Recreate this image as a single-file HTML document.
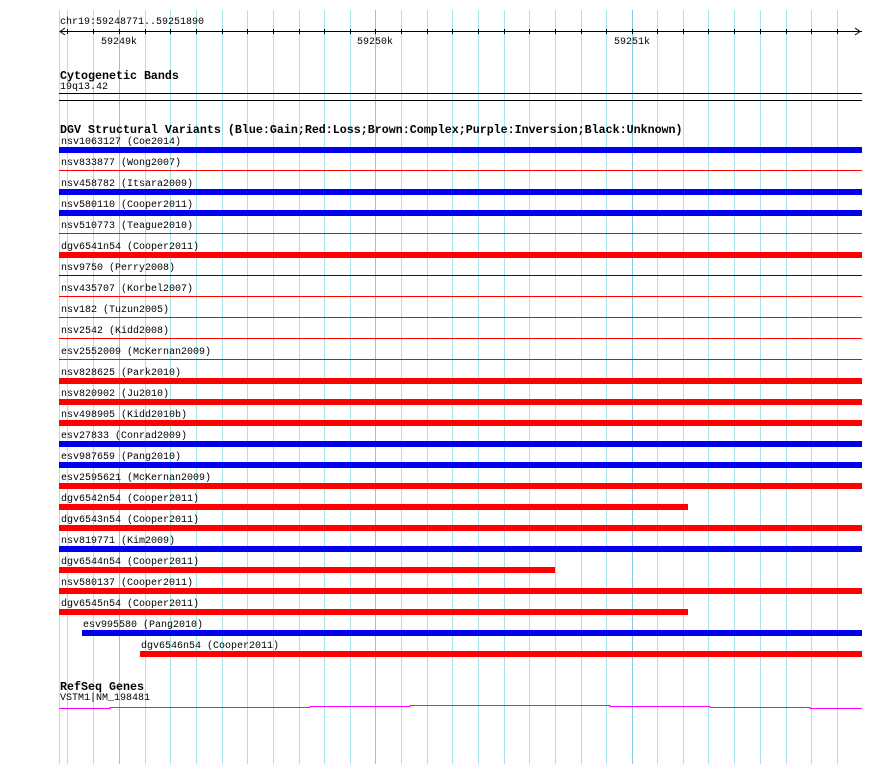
<!DOCTYPE html>
<html><head><meta charset="utf-8"><style>
body{margin:0;width:890px;height:764px;background:#fff;position:relative;overflow:hidden;font-family:"Liberation Mono",monospace;color:#000}
div{position:absolute}
.g{top:10px;bottom:0;width:1px;background:#a6e4ee}
.gm{top:10px;bottom:0;width:1px;background:#84c8ec}
.t{font-size:10px;line-height:10px;white-space:pre;margin-top:2px}
.b{font-size:11.67px;line-height:12px;font-weight:bold;white-space:pre;margin-top:2px}
.k{height:6px}
.n{height:1px}
.R{background:#ff0000}.B{background:#0000ee}
.tk{width:1px;height:5px;top:29px;background:#000}
</style></head><body>
<div class="g" style="left:59px"></div>
<div class="g" style="left:67px"></div><div class="g" style="left:93px"></div><div class="gm" style="left:119px"></div><div class="g" style="left:145px"></div><div class="g" style="left:170px"></div><div class="g" style="left:196px"></div><div class="g" style="left:222px"></div><div class="g" style="left:247px"></div><div class="g" style="left:273px"></div><div class="g" style="left:299px"></div><div class="g" style="left:324px"></div><div class="g" style="left:350px"></div><div class="gm" style="left:375px"></div><div class="g" style="left:401px"></div><div class="g" style="left:427px"></div><div class="g" style="left:452px"></div><div class="g" style="left:478px"></div><div class="g" style="left:504px"></div><div class="g" style="left:529px"></div><div class="g" style="left:555px"></div><div class="g" style="left:581px"></div><div class="g" style="left:606px"></div><div class="gm" style="left:632px"></div><div class="g" style="left:657px"></div><div class="g" style="left:683px"></div><div class="g" style="left:708px"></div><div class="g" style="left:734px"></div><div class="g" style="left:760px"></div><div class="g" style="left:786px"></div><div class="g" style="left:811px"></div><div class="g" style="left:837px"></div>

<div class="t" style="left:60px;top:16px">chr19:59248771..59251890</div>
<div style="left:60px;top:31px;width:802px;height:1px;background:#000"></div>
<svg style="position:absolute;left:58px;top:26px" width="808" height="11"><path d="M7 2 L2 5.5 L7 9 M797 2 L802 5.5 L797 9" stroke="#000" fill="none"/></svg>
<div class="tk" style="left:67px"></div><div class="tk" style="left:93px"></div><div class="tk" style="left:119px"></div><div class="tk" style="left:145px"></div><div class="tk" style="left:170px"></div><div class="tk" style="left:196px"></div><div class="tk" style="left:222px"></div><div class="tk" style="left:247px"></div><div class="tk" style="left:273px"></div><div class="tk" style="left:299px"></div><div class="tk" style="left:324px"></div><div class="tk" style="left:350px"></div><div class="tk" style="left:375px"></div><div class="tk" style="left:401px"></div><div class="tk" style="left:427px"></div><div class="tk" style="left:452px"></div><div class="tk" style="left:478px"></div><div class="tk" style="left:504px"></div><div class="tk" style="left:529px"></div><div class="tk" style="left:555px"></div><div class="tk" style="left:581px"></div><div class="tk" style="left:606px"></div><div class="tk" style="left:632px"></div><div class="tk" style="left:657px"></div><div class="tk" style="left:683px"></div><div class="tk" style="left:708px"></div><div class="tk" style="left:734px"></div><div class="tk" style="left:760px"></div><div class="tk" style="left:786px"></div><div class="tk" style="left:811px"></div><div class="tk" style="left:837px"></div>
<div class="t" style="left:101px;top:36px">59249k</div>
<div class="t" style="left:357px;top:36px">59250k</div>
<div class="t" style="left:614px;top:36px">59251k</div>

<div class="b" style="left:60px;top:68px">Cytogenetic Bands</div>
<div class="t" style="left:60px;top:81px">19q13.42</div>
<div style="left:59px;top:93px;width:803px;height:1px;background:#000"></div>
<div style="left:59px;top:100px;width:803px;height:1px;background:#000"></div>

<div class="b" style="left:60px;top:122px">DGV Structural Variants (Blue:Gain;Red:Loss;Brown:Complex;Purple:Inversion;Black:Unknown)</div>

<div class="t" style="left:61px;top:136px">nsv1063127 (Coe2014)</div><div class="k B" style="left:59px;top:147px;width:803px"></div>
<div class="t" style="left:61px;top:157px">nsv833877 (Wong2007)</div><div class="n R" style="left:59px;top:170px;width:803px"></div>
<div class="t" style="left:61px;top:178px">nsv458782 (Itsara2009)</div><div class="k B" style="left:59px;top:189px;width:803px"></div>
<div class="t" style="left:61px;top:199px">nsv580110 (Cooper2011)</div><div class="k B" style="left:59px;top:210px;width:803px"></div>
<div class="t" style="left:61px;top:220px">nsv510773 (Teague2010)</div><div class="n R" style="left:59px;top:233px;width:803px"></div>
<div class="t" style="left:61px;top:241px">dgv6541n54 (Cooper2011)</div><div class="k R" style="left:59px;top:252px;width:803px"></div>
<div class="t" style="left:61px;top:262px">nsv9750 (Perry2008)</div><div class="n B" style="left:59px;top:275px;width:803px"></div>
<div class="t" style="left:61px;top:283px">nsv435707 (Korbel2007)</div><div class="n R" style="left:59px;top:296px;width:803px"></div>
<div class="t" style="left:61px;top:304px">nsv182 (Tuzun2005)</div><div class="n R" style="left:59px;top:317px;width:803px"></div>
<div class="t" style="left:61px;top:325px">nsv2542 (Kidd2008)</div><div class="n R" style="left:59px;top:338px;width:803px"></div>
<div class="t" style="left:61px;top:346px">esv2552009 (McKernan2009)</div><div class="n R" style="left:59px;top:359px;width:803px"></div>
<div class="t" style="left:61px;top:367px">nsv828625 (Park2010)</div><div class="k R" style="left:59px;top:378px;width:803px"></div>
<div class="t" style="left:61px;top:388px">nsv820902 (Ju2010)</div><div class="k R" style="left:59px;top:399px;width:803px"></div>
<div class="t" style="left:61px;top:409px">nsv498905 (Kidd2010b)</div><div class="k R" style="left:59px;top:420px;width:803px"></div>
<div class="t" style="left:61px;top:430px">esv27833 (Conrad2009)</div><div class="k B" style="left:59px;top:441px;width:803px"></div>
<div class="t" style="left:61px;top:451px">esv987659 (Pang2010)</div><div class="k B" style="left:59px;top:462px;width:803px"></div>
<div class="t" style="left:61px;top:472px">esv2595621 (McKernan2009)</div><div class="k R" style="left:59px;top:483px;width:803px"></div>
<div class="t" style="left:61px;top:493px">dgv6542n54 (Cooper2011)</div><div class="k R" style="left:59px;top:504px;width:629px"></div>
<div class="t" style="left:61px;top:514px">dgv6543n54 (Cooper2011)</div><div class="k R" style="left:59px;top:525px;width:803px"></div>
<div class="t" style="left:61px;top:535px">nsv819771 (Kim2009)</div><div class="k B" style="left:59px;top:546px;width:803px"></div>
<div class="t" style="left:61px;top:556px">dgv6544n54 (Cooper2011)</div><div class="k R" style="left:59px;top:567px;width:496px"></div>
<div class="t" style="left:61px;top:577px">nsv580137 (Cooper2011)</div><div class="k R" style="left:59px;top:588px;width:803px"></div>
<div class="t" style="left:61px;top:598px">dgv6545n54 (Cooper2011)</div><div class="k R" style="left:59px;top:609px;width:629px"></div>
<div class="t" style="left:83px;top:619px">esv995580 (Pang2010)</div><div class="k B" style="left:82px;top:630px;width:780px"></div>
<div class="t" style="left:141px;top:640px">dgv6546n54 (Cooper2011)</div><div class="k R" style="left:140px;top:651px;width:722px"></div>

<div class="b" style="left:60px;top:679px">RefSeq Genes</div>
<div class="t" style="left:60px;top:692px">VSTM1|NM_198481</div>
<svg style="position:absolute;left:0;top:700px" width="890" height="12"><path d="M59 8.5H110V7.5H310V6.5H410V5.5H610V6.5H710V7.5H810V8.5H862" stroke="#ff00ff" fill="none"/></svg>
</body></html>
